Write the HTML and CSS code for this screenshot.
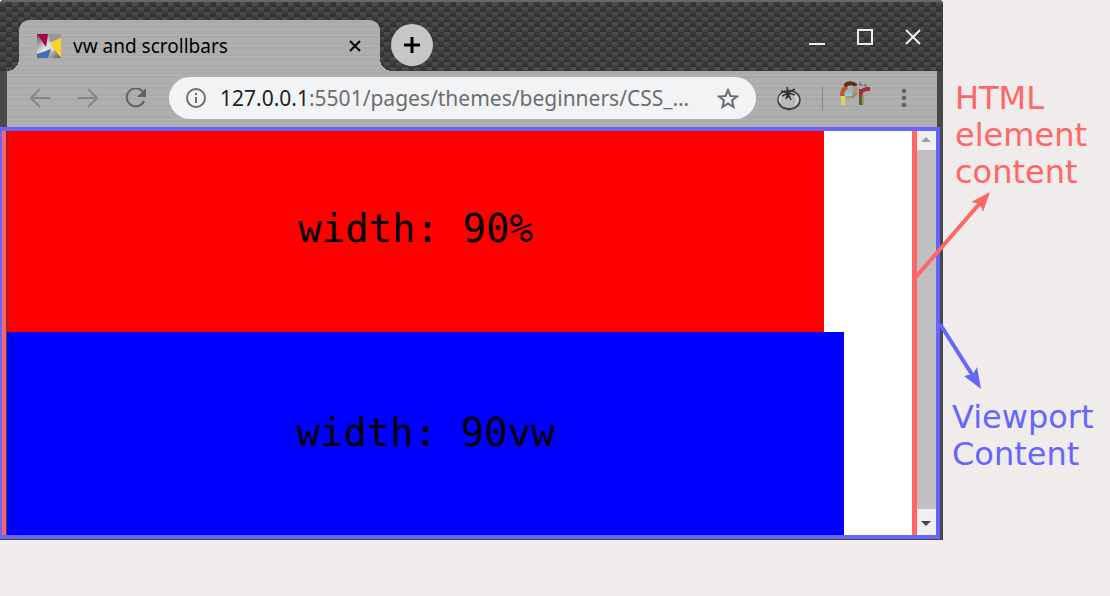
FILE: index.html
```html
<!DOCTYPE html>
<html lang="en">
<head>
<meta charset="utf-8">
<title>vw and scrollbars</title>
<link rel="stylesheet" href="styles.css">
</head>
<body>
<main class="figure">
  <section class="browser">
    <header class="titlebar">
      <div class="tab">
        <svg class="favicon" viewBox="0 0 24 24" aria-hidden="true">
          <defs>
            <linearGradient id="silver" x2="1" y2="1"><stop stop-color="#555"/><stop offset=".5" stop-color="#eee"/><stop offset="1" stop-color="#555"/></linearGradient>
          </defs>
          <path fill="url(#silver)" d="M0 0h24v24H0z"/>
          <path fill="#999" d="M11 0h13v4L13 9z"/>
          <path fill="#ddd" d="m10 9 4-1 4 9-5-1-4-1z"/>
          <path fill="#a8004c" d="M0 0h11L9 13z"/>
          <path fill="#ffd21f" d="M24 4v20L13 9z"/>
          <path fill="#3c6fb4" d="M0 20l14-5-3 9H0z"/>
        </svg>
        <span class="tab-title">vw and scrollbars</span>
        <button class="tab-close" aria-label="Close tab"><svg viewBox="0 0 14 14"><path d="m2 2 10 10M12 2 2 12"/></svg></button>
      </div>
      <button class="new-tab" aria-label="New tab"><svg viewBox="0 0 18 18"><path d="M9 1v16M1 9h16"/></svg></button>
      <div class="window-buttons">
        <button aria-label="Minimize"><svg viewBox="0 0 18 18"><path d="M1 16h16"/></svg></button>
        <button aria-label="Maximize"><svg viewBox="0 0 18 18"><path d="M2 2h14v14H2z"/></svg></button>
        <button aria-label="Close"><svg viewBox="0 0 18 18"><path d="m2 2 14 14M16 2 2 16"/></svg></button>
      </div>
    </header>
    <nav class="toolbar">
      <button class="nav-button faded" aria-label="Back"><svg viewBox="0 0 20 20"><path d="M20 10H2M10 1l-9 9 9 9"/></svg></button>
      <button class="nav-button faded" aria-label="Forward"><svg viewBox="0 0 20 20"><path d="M0 10h18M10 1l9 9-9 9"/></svg></button>
      <button class="nav-button reload" aria-label="Reload"><svg viewBox="0 0 22 20"><path d="M18 4a9 9 0 1 0 1 9"/><path class="solid" d="M21 0v9h-9z"/></svg></button>
      <a class="address" href="#">
        <svg class="info" viewBox="0 0 20 20"><circle cx="10" cy="10" r="9"/><path d="M10 9v6M10 5v2"/></svg>
        <span class="url"><b>127.0.0.1</b>:5501/pages/themes/beginners/CSS_…</span>
        <svg class="star" viewBox="0 0 22 21"><path d="m11 2 2.500 6 6.500.500-5 4 1.600 6.500-5.600-3.500L5.400 19 7 12.500l-5-4L8.500 8z"/></svg>
      </a>
      <div class="extensions">
        <button class="tomato" aria-label="Pomodoro timer"><svg viewBox="0 0 26 25">
          <ellipse cx="13" cy="14" rx="11" ry="9.500" fill="#b8b8b8" stroke="#333" stroke-width="1.300"/>
          <path d="M3 17c3 7 16 8 20 0" fill="none" stroke="#444" stroke-width="1.300"/>
          <path d="M4 16c-2-7 4-9 6-8M18 9c4 2 4 7 1 10" fill="none" stroke="#ddd" stroke-width="1.500"/>
          <path d="M11 1l1 5M5 5l7 2 7-4M6 10l6-3 7 2M10 13l2-6 3 7M12 7v5" fill="none" stroke="#333" stroke-width="1.500"/>
        </svg></button>
        <span class="divider"></span>
        <button class="profile" aria-label="Profile"><svg viewBox="0 0 34 26">
          <g fill="none" stroke-width="4">
            <path d="M5 15v9" stroke="#d9d451"/><path d="M4 15c0-5 2-8 5-9" stroke="#ba5728"/>
            <path d="M7 5c3-4 9-3 11 0" stroke="#543019"/><path d="M17 5c2 5 0 8-3 9" stroke="#a99480"/>
            <path d="M7 14h7" stroke="#8ed0df" stroke-width="3"/><path d="M8 16h8l3-4" stroke="#8b7928" stroke-width="1"/>
            <path d="M23 8v8M24 10c3-3 5-2 8-2" stroke="#a52d3c"/><path d="M23 16v8" stroke="#456b35"/><path d="M25 14v10" stroke="#aa8b70" stroke-width="2"/>
            <path d="M22 1v4m1-2 2 2m2-2v2h2" stroke="#555" stroke-width="1"/>
          </g>
        </svg></button>
        <button class="menu" aria-label="Menu"><svg viewBox="0 0 6 20"><circle cx="3" cy="3" r="2.300"/><circle cx="3" cy="10" r="2.300"/><circle cx="3" cy="17" r="2.300"/></svg></button>
      </div>
    </nav>
    <div class="viewport">
      <div class="page">
        <div class="box box-percent">width: 90%</div>
        <div class="box box-vw">width: 90vw</div>
      </div>
      <div class="scrollbar">
        <button aria-label="Scroll up"><svg viewBox="0 0 10 6"><path fill="#a0a0a0" d="M5 0l5 5H0z"/></svg></button>
        <button class="down" aria-label="Scroll down"><svg viewBox="0 0 10 6"><path fill="#444" d="M0 0h10L5 5z"/></svg></button>
      </div>
    </div>
  </section>
  <aside class="labels">
    <p class="label-html">HTML element content</p>
    <p class="label-viewport">Viewport Content</p>
    <svg class="arrows" viewBox="0 0 90 210" aria-hidden="true">
      <path d="M6 93 72 17" fill="none" stroke="#f66" stroke-width="4"/>
      <path d="m81 7-7 20-3-8-9-2z" fill="#f66"/>
      <path d="m31 139 33 52" fill="none" stroke="#66f" stroke-width="4"/>
      <path d="m72 204-17-13 9-2 4-7z" fill="#66f"/>
    </svg>
  </aside>
</main>
</body>
</html>
```
FILE: styles.css
```css
* { box-sizing: border-box; }
body { margin: 0; background: #f0eceb; font-family: "Noto Sans", sans-serif; }
button { display: grid; place-items: center; padding: 0; border: 0; background: none; color: inherit; }
svg { display: block; fill: none; stroke: currentColor; }
.figure { display: flex; align-items: flex-start; }

.browser {
  flex: 1;
  min-width: 0;
  padding: 0 3px 1px 0;
  border-radius: 4px 4px 0 0;
  background: #484848;
}
.titlebar {
  display: flex;
  align-items: flex-start;
  height: 71px;
  margin-right: -3px;
  padding: 18px 20px 0 19px;
  border-top: 2px solid #666;
  border-radius: 4px 4px 0 0;
  background:
    repeating-linear-gradient(#0000 0 3px, #0002 3px 5px),
    conic-gradient(#383838 25%, #4b4b4b 0 50%, #383838 0 75%, #4b4b4b 0) 0 0 / 12px 10px;
}
.tab, .toolbar {
  background: repeating-linear-gradient(#adadad 0 2px, #a8a8a8 2px 3px, #b1b1b1 3px 5px, #aaa 5px 7px, #afafaf 7px 11px);
}
.tab {
  position: relative;
  display: flex;
  align-items: center;
  width: 361px;
  height: 51px;
  padding: 0 18px;
  border-radius: 10px 10px 0 0;
}
.tab::before, .tab::after {
  content: "";
  position: absolute;
  bottom: 0;
  width: 12px;
  height: 12px;
}
.tab::before { right: 100%; background: radial-gradient(circle at 0 0, #0000 12px, #acacac 12px); }
.tab::after { left: 100%; background: radial-gradient(circle at 100% 0, #0000 12px, #acacac 12px); }
.favicon { width: 24px; height: 24px; stroke: none; }
.tab-title { flex: 1; margin-left: 12px; font-size: 19px; }
.tab-close svg { width: 14px; stroke: #000; stroke-width: 2; }
.new-tab { width: 42px; height: 42px; margin: 4px 0 0 11px; border-radius: 50%; background: #c6c6c6; }
.new-tab svg { width: 18px; stroke: #000; stroke-width: 3; }
.window-buttons { display: flex; gap: 30px; margin: 8px 1px 0 auto; color: #eee; }
.window-buttons svg { width: 18px; stroke-width: 2; }

.toolbar {
  display: flex;
  align-items: center;
  height: 56px;
  margin: 0 3px 0 7px;
  padding: 0 30px 2px 22px;
  color: #5f6368;
}
.nav-button { width: 22px; margin-right: 26px; }
.nav-button svg { width: 20px; stroke-width: 2; }
.reload svg { width: 22px; }
.nav-button .solid { fill: currentColor; stroke: none; }
.faded { color: #85878a; }
.address {
  display: flex;
  flex: 1;
  align-items: center;
  min-width: 0;
  height: 42px;
  margin-left: -4px;
  padding: 0 17px;
  border-radius: 21px;
  background: #f1f3f4;
  color: #6b6e71;
  text-decoration: none;
}
.info { width: 20px; stroke-width: 2; }
.url { flex: 1; margin-left: 14px; font-size: 21px; white-space: nowrap; }
.url b { color: #202124; font-weight: 400; }
.star { width: 22px; stroke-width: 2; }
.extensions { display: flex; align-items: center; margin-left: 20px; }
.extensions svg { stroke: none; }
.tomato svg { width: 26px; }
.divider { width: 1px; height: 24px; margin: 0 15px 0 20px; background: #888; }
.profile svg { width: 34px; margin-bottom: 8px; }
.menu { margin-left: 29px; }
.menu svg { width: 6px; fill: #5f6368; }

.viewport { display: flex; border: 4px solid #66f; border-left-width: 2px; }
.page {
  flex: 1;
  padding-left: 1px;
  border-left: 4px solid #f66;
  border-right: 5px solid #f66;
  background: linear-gradient(90deg, #444 1px, #fff 1px);
}
.box { display: grid; place-items: center; font: 39px "DejaVu Sans Mono", monospace; }
.box-percent { width: 90.300%; height: 201px; padding-bottom: 6px; background: #f00; }
.box-vw { width: 92.500%; height: 203px; padding-bottom: 2px; background: #00f; }
.scrollbar {
  display: flex;
  flex-direction: column;
  justify-content: space-between;
  width: 19px;
  background: #c0c0c0;
}
.scrollbar button { height: 19px; padding: 0 1px 2px 0; background: #f0f0f0; }
.scrollbar .down { height: 26px; padding: 3px 1px 0 0; }
.scrollbar svg { width: 10px; stroke: none; }

.labels {
  position: relative;
  width: 167px;
  padding: 80px 12px 0 9px;
  font: 32px/37px "DejaVu Sans", sans-serif;
}
.labels p { margin: 0; }
.label-html { padding-left: 3px; color: #f66; }
.label-viewport { padding-top: 208px; color: #66f; }
.arrows { position: absolute; top: 185px; left: -34px; width: 90px; stroke: none; }
```
